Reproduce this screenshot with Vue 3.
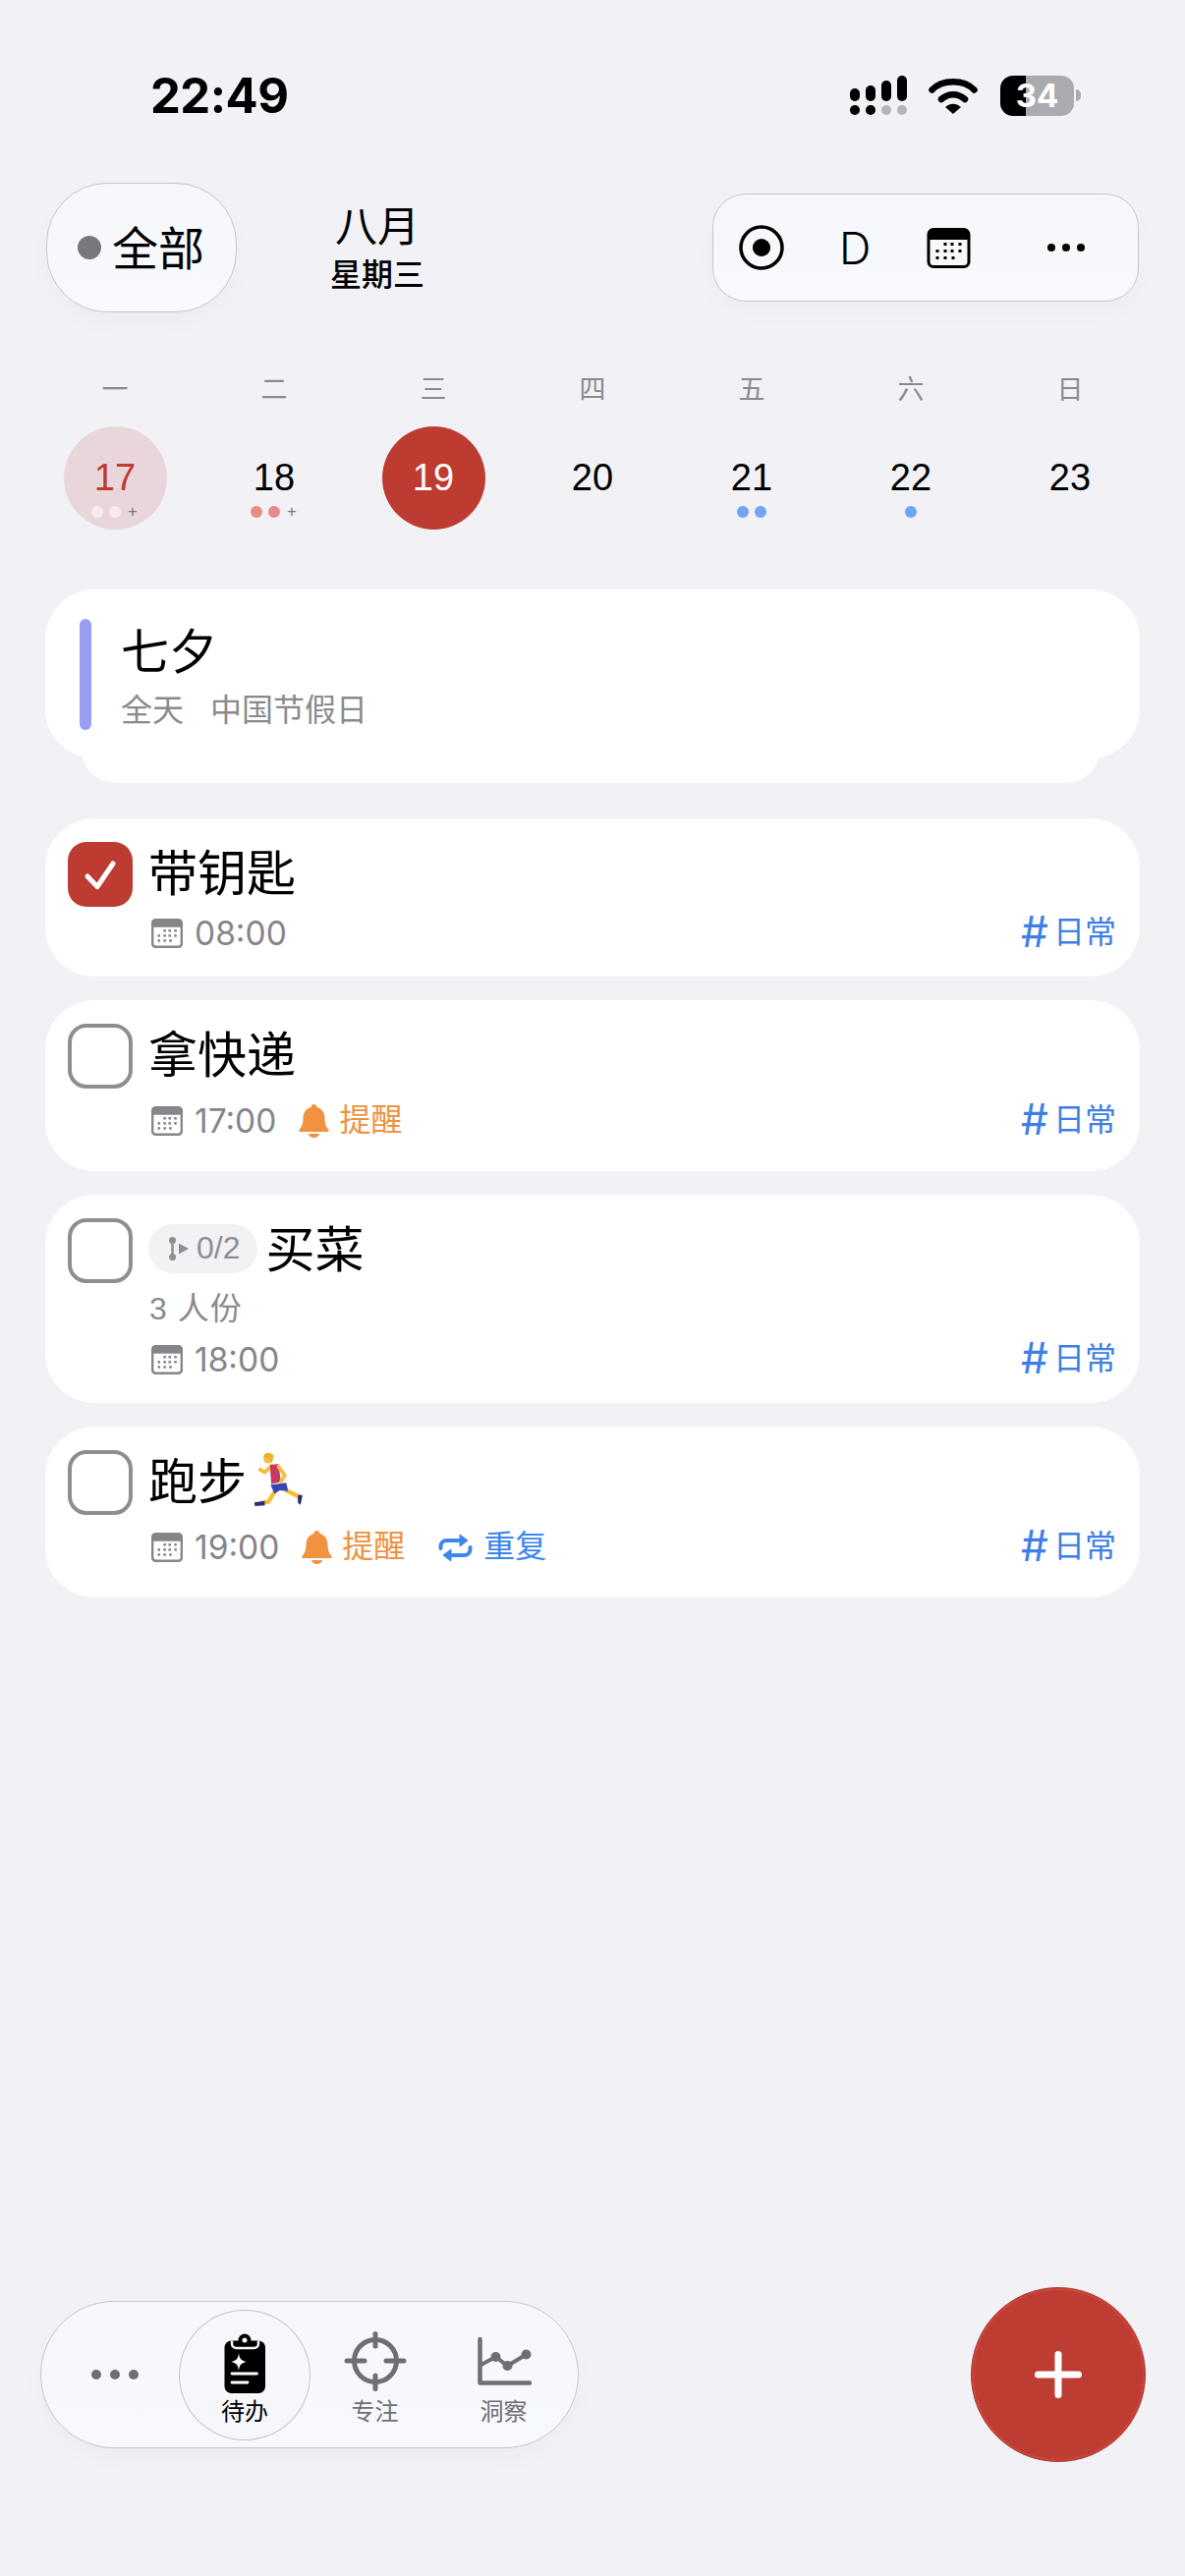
<script setup>
const weekdays = [
  { label: '一', date: 17, state: 'past', dots: ['#f6ecee', '#f6ecee'], more: true },
  { label: '二', date: 18, dots: ['#e98b8b', '#e98b8b'], more: true },
  { label: '三', date: 19, state: 'today', dots: [] },
  { label: '四', date: 20, dots: [] },
  { label: '五', date: 21, dots: ['#70a5f3', '#70a5f3'] },
  { label: '六', date: 22, dots: ['#70a5f3'] },
  { label: '日', date: 23, dots: [] }
]

const tasks = [
  { id: 1, title: '带钥匙', time: '08:00', done: true },
  { id: 2, title: '拿快递', time: '17:00', remind: true },
  { id: 3, title: '买菜', time: '18:00', subtasks: '0/2', note: '3 人份' },
  { id: 4, title: '跑步', time: '19:00', remind: true, repeat: true, runner: true }
]

// little squares on the calendar glyph
const calDots = [
  [17, 15], [24, 15], [32, 15],
  [9, 22], [17, 22], [24, 22], [32, 22],
  [9, 29], [17, 29], [25, 29]
]
</script>

<template>
  <div class="page">
    <div class="status">
      <span class="clock">22:49</span>
      <div class="status-icons">
        <svg class="signal" width="58" height="42" viewBox="0 0 58 42">
          <rect x="0" y="13" width="10" height="13" rx="5" />
          <rect x="16" y="10" width="10" height="16" rx="5" />
          <rect x="32" y="5" width="10" height="21" rx="5" />
          <rect x="48" y="0" width="10" height="26" rx="5" />
          <circle cx="5" cy="35" r="5" />
          <circle cx="21" cy="35" r="5" />
          <circle cx="37" cy="35" r="5" fill="#b6b6ba" />
          <circle cx="53" cy="35" r="5" fill="#b6b6ba" />
        </svg>
        <svg class="wifi" width="50" height="38" viewBox="0 0 50 38">
          <path d="M3.500 13.500C14 2.500 36 2.500 46.500 13.500" fill="none" stroke="#000" stroke-width="6.500" stroke-linecap="round" />
          <path d="M13 23C20 16.500 30 16.500 37 23" fill="none" stroke="#000" stroke-width="6.500" stroke-linecap="round" />
          <path d="M25 38L17 31C22 26.500 28 26.500 33 31Z" />
        </svg>
        <div class="battery"><span>34</span></div>
        <i class="battery-cap"></i>
      </div>
    </div>

    <header class="top">
      <button class="filter">
        <i class="filter-dot"></i>
        <span class="filter-text">全部</span>
      </button>
      <div class="month">
        <div class="month-name">八月</div>
        <div class="month-day">星期三</div>
      </div>
      <div class="tools">
        <svg width="46" height="46" viewBox="0 0 46 46">
          <circle cx="23" cy="23" r="21" fill="none" stroke="#000" stroke-width="3.500" />
          <circle cx="23" cy="23" r="9" />
        </svg>
        <span class="tool-d">D</span>
        <svg class="tool-cal" width="45" height="41" viewBox="0 0 44 41">
          <rect x="1.500" y="1.500" width="41" height="38" rx="5" fill="none" stroke="#000" stroke-width="3" />
          <path d="M1.500 12V6.500a5 5 0 0 1 5-5h31a5 5 0 0 1 5 5V12Z" />
          <rect v-for="d in calDots" :key="d.join()" :x="d[0]" :y="d[1]" width="3" height="3" />
        </svg>
        <div class="tool-more"><i></i><i></i><i></i></div>
      </div>
    </header>

    <section class="week">
      <div v-for="day in weekdays" :key="day.date" class="weekday">
        <div class="weekday-label">{{ day.label }}</div>
        <div class="day" :class="day.state">
          <div class="day-num">{{ day.date }}</div>
          <div class="day-dots">
            <i v-for="(c, i) in day.dots" :key="i" :style="{ background: c }"></i>
            <em v-if="day.more">+</em>
          </div>
        </div>
      </div>
    </section>

    <section class="event-wrap">
      <div class="event">
        <i class="event-bar"></i>
        <div>
          <div class="event-title">七夕</div>
          <div class="event-sub"><span>全天</span><span>中国节假日</span></div>
        </div>
      </div>
      <div class="event-back"></div>
    </section>

    <section class="tasks">
      <article v-for="task in tasks" :key="task.id" class="task">
        <div class="check" :class="{ done: task.done }">
          <svg v-if="task.done" width="66" height="66" viewBox="0 0 66 66">
            <path d="M20 35L30 45.500L46 22" fill="none" stroke="#fff" stroke-width="5" stroke-linecap="round" stroke-linejoin="round" />
          </svg>
        </div>
        <div class="task-body">
          <div class="task-title">
            <span v-if="task.subtasks" class="sub-pill">
              <svg width="20" height="24" viewBox="0 0 20 24">
                <path d="M3.500 3V21" stroke="#8e8e93" stroke-width="2.500" />
                <circle cx="3.500" cy="3.500" r="3.500" fill="#8e8e93" />
                <circle cx="3.500" cy="20.500" r="3.500" fill="#8e8e93" />
                <path d="M10 6.500L20 12L10 17.500Z" fill="#8e8e93" />
              </svg>
              {{ task.subtasks }}
            </span>
            <span class="task-name">{{ task.title }}</span>
            <svg v-if="task.runner" class="runner" width="55" height="58" viewBox="25 25 165 175" role="img" aria-label="🏃">
              <path d="M50 185L74 180L92 150" fill="none" stroke="#f6bd3d" stroke-width="13" stroke-linejoin="round" />
              <path d="M125 145L166 164L170 176" fill="none" stroke="#f6bd3d" stroke-width="13" stroke-linejoin="round" />
              <path d="M30 183L62 178L62 192L32 194Z" fill="#25306e" />
              <path d="M164 160L178 160L172 190L164 184Z" fill="#25306e" />
              <path d="M84 70L62 90L48 82" fill="none" stroke="#f6bd3d" stroke-width="12" stroke-linecap="round" stroke-linejoin="round" />
              <path d="M80 128L128 122L134 148L108 146L92 156Z" fill="#3a46b0" />
              <path d="M78 68L104 64L112 120L82 126Z" fill="#c8385f" />
              <path d="M104 72L124 100L112 118" fill="none" stroke="#f6bd3d" stroke-width="11" stroke-linecap="round" stroke-linejoin="round" />
              <circle cx="73" cy="48" r="15" fill="#f6bd3d" />
              <path d="M58 42C60 28 82 26 90 40C88 52 82 58 80 60C78 46 68 42 58 42Z" fill="#eeb02f" />
            </svg>
          </div>
          <div v-if="task.note" class="task-note">{{ task.note }}</div>
          <div class="meta" :class="{ tall: task.remind, tight: task.note }">
            <svg class="cal" width="32" height="30" viewBox="0 0 44 41">
              <rect x="1.500" y="1.500" width="41" height="38" rx="5" fill="none" stroke="#85858a" stroke-width="3.500" />
              <path d="M1.500 12V6.500a5 5 0 0 1 5-5h31a5 5 0 0 1 5 5V12Z" fill="#85858a" />
              <rect v-for="d in calDots" :key="d.join()" :x="d[0]" :y="d[1]" width="3.500" height="3.500" fill="#85858a" />
            </svg>
            <span class="time">{{ task.time }}</span>
            <span v-if="task.remind" class="remind">
              <svg width="31" height="34" viewBox="0 0 31 34">
                <path d="M15.500 0c-2 0-3 1.500-3 3C7 4.500 4.500 9 4.500 14c0 6-1.500 9-4 12-.7 1 0 2 1 2h28c1 0 1.700-1 1-2-2.500-3-4-6-4-12 0-5-2.500-9.500-8-11 0-1.500-1-3-3-3Z" fill="#f0923e" />
                <path d="M10 30h11a5.500 4 0 0 1-11 0Z" fill="#f0923e" />
              </svg>
              <span class="cjk">提醒</span>
            </span>
            <span v-if="task.repeat" class="repeat">
              <svg width="35" height="29" viewBox="0 0 35 29">
                <path d="M2.500 15v-2a6 6 0 0 1 6-6H23" fill="none" stroke="#3d86ea" stroke-width="4" stroke-linecap="round" />
                <path d="M22 1L30 7L22 13Z" fill="#3d86ea" stroke="#3d86ea" stroke-linejoin="round" />
                <path d="M32.500 14v2a6 6 0 0 1-6 6H12" fill="none" stroke="#3d86ea" stroke-width="4" stroke-linecap="round" />
                <path d="M13 16L5 22L13 28Z" fill="#3d86ea" stroke="#3d86ea" stroke-linejoin="round" />
              </svg>
              <span class="cjk">重复</span>
            </span>
            <span class="tag"><b>#</b><span class="cjk">日常</span></span>
          </div>
        </div>
      </article>
    </section>

    <footer class="bottom">
      <nav class="tabs">
        <div class="tab-more"><i></i><i></i><i></i></div>
        <div class="tab active">
          <svg width="70" height="63" viewBox="0 0 70 63">
            <rect x="14.500" y="9.500" width="41.500" height="53.500" rx="7" />
            <path d="M22 9.500v3a4.500 4.500 0 0 0 4.500 4.500h18a4.500 4.500 0 0 0 4.500-4.500v-3" fill="none" stroke="#f6f7fa" stroke-width="2.500" />
            <circle cx="35" cy="9" r="6.500" />
            <circle cx="35" cy="9" r="2.500" fill="#f6f7fa" />
            <path d="M29 22C29.800 28 31 29.500 37 31C31 32.500 29.800 34 29 40C28.200 34 27 32.500 21 31C27 29.500 28.200 28 29 22Z" fill="#fff" />
            <path d="M22 43H47.500M22 52H38" stroke="#fff" stroke-width="2.800" stroke-linecap="round" />
          </svg>
          <span>待办</span>
        </div>
        <div class="tab">
          <svg width="70" height="63" viewBox="0 0 70 63">
            <g fill="none" stroke="#6e6e73" stroke-width="5" stroke-linecap="round">
              <circle cx="35" cy="30" r="21.500" />
              <path d="M35 2.500V15M35 45V58.500M6 30H24M46 30H64" />
            </g>
          </svg>
          <span>专注</span>
        </div>
        <div class="tab">
          <svg width="70" height="63" viewBox="0 0 70 63">
            <path d="M10.500 8V52.500H61" fill="none" stroke="#6e6e73" stroke-width="4.500" stroke-linecap="round" stroke-linejoin="round" />
            <path d="M11.500 34L26.500 26L38.500 35L57.500 23.500" fill="none" stroke="#6e6e73" stroke-width="4" />
            <circle cx="26.500" cy="26" r="5" fill="#6e6e73" />
            <circle cx="38.500" cy="35" r="5" fill="#6e6e73" />
            <circle cx="57.500" cy="23.500" r="5" fill="#6e6e73" />
          </svg>
          <span>洞察</span>
        </div>
      </nav>
      <button class="fab" aria-label="添加">
        <svg width="50" height="50" viewBox="0 0 50 50">
          <path d="M25 4.500V45.500M4.500 25H45.500" stroke="#fff" stroke-width="7" stroke-linecap="round" />
        </svg>
      </button>
    </footer>
  </div>
</template>

<style>
body {
  background: #f1f1f6;
}
</style>

<style scoped>
.page {
  display: flex;
  flex-direction: column;
  min-height: 100vh;
  background: #f1f1f6;
  color: #000;
  font-family: "Liberation Sans", "Noto Sans CJK SC", sans-serif;
}

i {
  display: block;
}

/* status bar */
.status {
  display: flex;
  align-items: center;
  justify-content: space-between;
  height: 54px;
  margin-top: 70px;
  padding: 0 106px 0 153px;
}

.clock {
  font-family: Inter, sans-serif;
  font-size: 49px;
  font-weight: 700;
  letter-spacing: -0.5px;
}

.status-icons {
  display: flex;
  align-items: center;
}

.signal {
  margin-top: 2px;
}

.wifi {
  margin-left: 22px;
}

.battery {
  display: flex;
  align-items: center;
  justify-content: center;
  width: 75px;
  height: 41px;
  margin-left: 23px;
  border-radius: 13px;
  background: linear-gradient(90deg, #000 26px, #aaaaaf 26px);
  color: #fff;
  font-family: Inter, sans-serif;
  font-size: 33px;
  font-weight: 700;
}

.battery-cap {
  width: 5px;
  height: 12px;
  margin-left: 2px;
  border-radius: 0 5px 5px 0;
  background: #aaaaaf;
}

/* header */
.top {
  display: flex;
  align-items: center;
  margin-top: 62px;
  padding: 0 47px;
}

.filter {
  display: flex;
  align-items: center;
  gap: 11px;
  width: 194px;
  height: 132px;
  padding: 0 0 0 31px;
  border: 1px solid #c6c6cb;
  border-radius: 62px;
  background: linear-gradient(#f6f7fa, #f8f9fc);
  box-shadow: 0 10px 24px rgba(0, 0, 0, 0.025);
  color: #000;
  font: inherit;
  font-size: 47px;
}

.filter-text {
  padding-bottom: 6px;
}

.filter-dot {
  flex: none;
  width: 24px;
  height: 24px;
  border-radius: 50%;
  background: #77777c;
}

.month {
  width: 100px;
  margin-left: 93px;
  text-align: center;
}

.month-name {
  font-size: 43px;
  line-height: 52px;
}

.month-day {
  margin-top: 3px;
  font-size: 32px;
  font-weight: 500;
  line-height: 40px;
}

.tools {
  display: flex;
  align-items: center;
  width: 434px;
  height: 110px;
  margin-left: auto;
  padding-left: 26px;
  box-sizing: border-box;
  border: 1px solid #c6c6cb;
  border-radius: 34px;
  background: linear-gradient(#f6f7fa, #f8f9fc);
  box-shadow: 0 10px 24px rgba(0, 0, 0, 0.025);
}

.tool-d {
  margin-left: 56px;
  font-family: Inter, sans-serif;
  font-size: 45px;
  font-weight: 300;
}

.tool-cal {
  margin-left: 57px;
}

.tool-more {
  display: flex;
  gap: 7px;
  margin-left: 78px;
}

.tool-more i {
  width: 8px;
  height: 8px;
  border-radius: 50%;
  background: #000;
}

/* week strip */
.week {
  display: grid;
  grid-template-columns: repeat(7, 162px);
  margin-top: 63px;
  padding: 0 36px;
}

.weekday {
  display: flex;
  flex-direction: column;
  align-items: center;
}

.weekday-label {
  height: 32px;
  color: #8a8a8e;
  font-size: 27px;
  line-height: 32px;
}

.day {
  width: 105px;
  height: 105px;
  margin-top: 21px;
  padding-top: 30px;
  box-sizing: border-box;
  border-radius: 50%;
  text-align: center;
}

.day.past {
  background: #e9d6da;
  color: #bd3b30;
}

.day.today {
  background: #bd3b30;
  color: #fff;
}

.day-num {
  font-size: 38px;
  line-height: 44px;
}

.day-dots {
  display: flex;
  align-items: center;
  justify-content: center;
  gap: 6px;
  height: 12px;
  margin-top: 7px;
}

.day-dots i {
  width: 12px;
  height: 12px;
  border-radius: 50%;
}

.day-dots em {
  width: 12px;
  color: #77777c;
  font-size: 17px;
  font-style: normal;
  line-height: 12px;
}

/* holiday card */
.event-wrap {
  position: relative;
  margin: 61px 46px 0;
  padding-bottom: 25px;
}

.event {
  position: relative;
  z-index: 1;
  display: flex;
  gap: 30px;
  height: 172px;
  padding: 30px 35px 0;
  box-sizing: border-box;
  border-radius: 50px;
  background: #fff;
  box-shadow: 0 1px 2px rgba(0, 0, 0, 0.015);
}

.event-bar {
  flex: none;
  width: 12px;
  height: 113px;
  border-radius: 6px;
  background: #9a9ef2;
}

.event-title {
  padding-top: 4px;
  font-size: 49px;
  line-height: 60px;
}

.event-sub {
  display: flex;
  gap: 27px;
  margin-top: 8px;
  color: #8a8a8e;
  font-size: 32px;
  line-height: 42px;
}

.event-back {
  position: absolute;
  right: 40px;
  bottom: 0;
  left: 36px;
  height: 70px;
  border-radius: 0 0 36px 36px;
  background: #fff;
}

/* task list */
.tasks {
  display: flex;
  flex-direction: column;
  gap: 24px;
  margin: 36px 46px 0;
}

.task {
  display: flex;
  gap: 16px;
  padding: 24px 24px 22px 23px;
  border-radius: 50px;
  background: #fff;
}

.check {
  flex: none;
  width: 66px;
  height: 66px;
  box-sizing: border-box;
  border: 4px solid #8e8e8e;
  border-radius: 19px;
}

.check.done {
  border: 0;
  background: #bd3b30;
}

.task-body {
  flex: 1;
  min-width: 0;
}

.task-title {
  display: flex;
  align-items: center;
  height: 66px;
  font-size: 50px;
}

.task-name {
  padding-bottom: 10px;
}

.sub-pill {
  display: flex;
  align-items: center;
  gap: 8px;
  height: 50px;
  margin: 0 8px 5px 0;
  padding: 0 18px 0 21px;
  border-radius: 25px;
  background: #f2f2f4;
  color: #8e8e93;
  font-size: 32px;
}

.runner {
  margin: 0 0 7px 6px;
}

.task-note {
  height: 44px;
  margin-top: 5px;
  padding-left: 1px;
  color: #8a8a8e;
  font-size: 32px;
  letter-spacing: 1px;
  line-height: 42px;
}

.meta {
  display: flex;
  align-items: center;
  height: 44px;
  margin-top: 5px;
  color: #85858a;
  font-size: 36px;
  line-height: 44px;
}

.meta.tall {
  height: 58px;
  margin-top: 4px;
}

.meta.tight {
  margin-top: 7px;
}

.cal {
  flex: none;
  margin-left: 3px;
}

.time {
  margin-left: 12px;
  font-family: Inter, sans-serif;
  font-size: 33.500px;
}

.cjk {
  padding-bottom: 3px;
}

.remind,
.repeat {
  display: flex;
  align-items: center;
  font-size: 32px;
}

.remind {
  gap: 10px;
  margin-left: 23px;
  color: #ee9240;
}

.repeat {
  gap: 11px;
  margin-left: 34px;
  color: #3d86ea;
}

.tag {
  display: flex;
  align-items: center;
  gap: 5px;
  margin-left: auto;
  color: #3d7fe6;
  font-size: 32px;
}

.tag b {
  padding-bottom: 4px;
  font-family: Inter, sans-serif;
  font-size: 44px;
  font-weight: 400;
  line-height: 1;
}

/* bottom bar */
.bottom {
  display: flex;
  align-items: center;
  justify-content: space-between;
  margin: auto 40px 116px 41px;
}

.tabs {
  display: flex;
  align-items: center;
  width: 548px;
  height: 150px;
  box-sizing: border-box;
  border: 1px solid #c6c6cb;
  border-radius: 75px;
  background: linear-gradient(#f6f7fa, #f8f9fc);
  box-shadow: 0 10px 24px rgba(0, 0, 0, 0.025);
}

.tab-more {
  display: flex;
  justify-content: center;
  gap: 9px;
  width: 140px;
  padding-left: 10px;
  box-sizing: border-box;
}

.tab-more i {
  width: 10px;
  height: 10px;
  border-radius: 50%;
  background: #6e6e73;
}

.tab {
  display: flex;
  flex-direction: column;
  align-items: center;
  width: 131px;
  height: 133px;
  padding-top: 22px;
  box-sizing: border-box;
  color: #6e6e73;
  font-size: 24px;
}

.tab span {
  margin-top: 4px;
  line-height: 30px;
}

.tab.active {
  width: 134px;
  border: 1px solid #c6c6cb;
  border-radius: 50%;
  background: #f6f7fa;
  color: #000;
}

.tab.active svg {
  margin-top: -1px;
}

.fab {
  display: flex;
  align-items: center;
  justify-content: center;
  width: 178px;
  height: 178px;
  padding: 0;
  border: 1px solid #a93a30;
  border-radius: 50%;
  background: #bd3d33;
  box-shadow: inset 0 0 0 2px rgba(232, 78, 66, 0.4);
}
</style>
